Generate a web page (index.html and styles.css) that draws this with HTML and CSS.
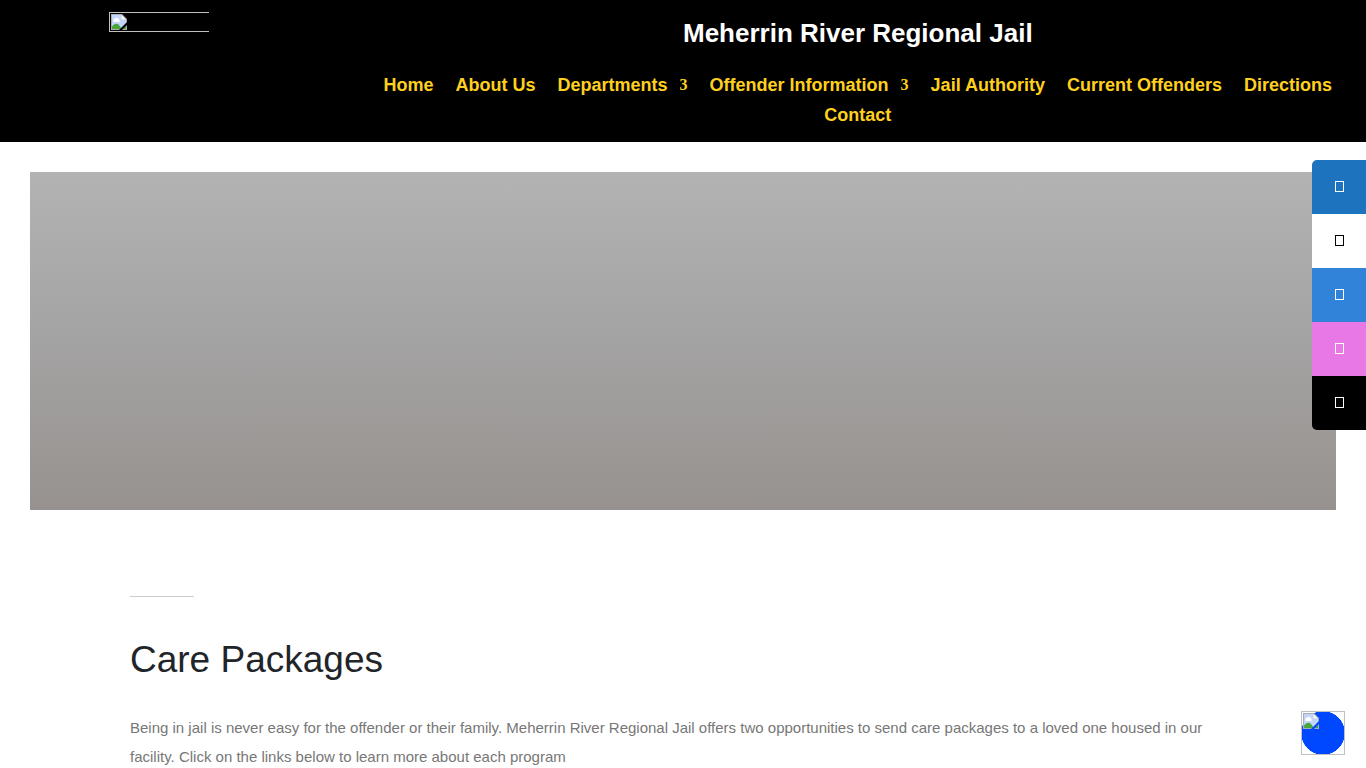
FILE: index.html
```html
<!DOCTYPE html>
<html lang="en">
<head>
<meta charset="UTF-8">
<meta name="viewport" content="width=device-width, initial-scale=1">
<title>Care Packages | Meherrin River Regional Jail</title>
<link rel="stylesheet" href="styles.css">
</head>
<body>

<!-- shared icon -->
<svg class="defs" width="0" height="0" aria-hidden="true">
  <symbol id="picture" viewBox="0 0 16 16">
    <path d="M0 0h11l5 5v11H0z" fill="#a9adb3"/>
    <path d="M1 1h9.500v4.500H15V15H1z" fill="#c3d5fb"/>
    <path d="M10.500 1v4.500H15z" fill="#fff"/>
    <path d="M3 8a2 2 0 0 1 1-3.500 2.500 2.500 0 0 1 4 1A1.500 1.500 0 0 1 8 8z" fill="#fff"/>
    <path d="M1 15v-2.500C3 9.500 6 9 8 11l3 4z" fill="#4aa53c"/>
    <path d="M11 15l4-3.500V15z" fill="#4aa53c"/>
    <path class="tear" d="M8 16l8-8v3l-5 5z"/>
  </symbol>
</svg>

<header class="header">
  <a class="logo" href="#" aria-label="Meherrin River Regional Jail">
    <svg class="picture" width="16" height="16"><use href="#picture"/></svg>
  </a>
  <div class="header-main">
    <h2 class="site-title">Meherrin River Regional Jail</h2>
    <nav class="menu">
      <a href="#">Home</a>
      <a href="#">About Us</a>
      <a href="#">Departments<span class="arrow">3</span></a>
      <a href="#">Offender Information<span class="arrow">3</span></a>
      <a href="#">Jail Authority</a>
      <a href="#">Current Offenders</a>
      <a href="#">Directions</a>
      <a href="#">Contact</a>
    </nav>
  </div>
</header>

<main class="page">
  <div class="hero"></div>
  <section class="content">
    <hr class="divider">
    <h1>Care Packages</h1>
    <p>Being in jail is never easy for the offender or their family. Meherrin River Regional Jail offers two opportunities to send care packages to a loved one housed in our facility. Click on the links below to learn more about each program</p>
  </section>
</main>

<aside class="toolbar">
  <button class="tool blue" type="button" aria-label="Tool 1"><span class="glyph"></span></button>
  <button class="tool white" type="button" aria-label="Tool 2"><span class="glyph"></span></button>
  <button class="tool light" type="button" aria-label="Tool 3"><span class="glyph"></span></button>
  <button class="tool pink" type="button" aria-label="Tool 4"><span class="glyph"></span></button>
  <button class="tool black" type="button" aria-label="Tool 5"><span class="glyph"></span></button>
</aside>

<button class="widget" type="button" aria-label="Accessibility">
  <svg class="picture" width="16" height="16"><use href="#picture"/></svg>
</button>

</body>
</html>
```
FILE: styles.css
```css
*
{
  box-sizing:border-box;
  margin:0;
  padding:0;
}
body
{
  background:#fff;
  color:#777;
  font-family:"Liberation Sans",Arial,sans-serif;
  font-size:15px;
  overflow-x:hidden;
}
button{border:none;cursor:pointer;}
.defs{position:absolute;}
.picture{display:block;}
.tear{fill:var(--tear);}

/* ===== Header ===== */
.header
{
  display:grid;
  grid-template-columns:5fr 16fr;
  column-gap:32px;
  padding:12px 0;
  background:#000;
}
.logo
{
  --tear:#000;
  justify-self:center;
  align-self:start;
  width:100px;
  height:20px;
  padding:1px;
  border:1px solid #c0c0c0;
  border-right:none;
}
.site-title
{
  margin-bottom:16px;
  color:#fff;
  font-size:26px;
  line-height:42px;
  text-align:center;
}
.menu
{
  display:flex;
  flex-wrap:wrap;
  justify-content:center;
  column-gap:22px;
}
.menu a
{
  display:flex;
  align-items:center;
  color:#ffd01e;
  font-size:18px;
  font-weight:bold;
  line-height:30px;
  text-decoration:none;
}
.arrow
{
  margin-left:12px;
  font-family:"Liberation Serif",serif;
  font-size:16px;
}

/* ===== Page ===== */
.page{padding:30px;}
.hero
{
  height:338px;
  background:linear-gradient(#b3b3b3,#a4a3a3 50%,#97928f);
}
.content{padding:86px 100px 0;}
.divider
{
  width:64px;
  border:none;
  border-top:1px solid #ccc;
}
h1
{
  margin:40px 0 30px;
  color:#212529;
  font-size:37px;
  font-weight:normal;
  line-height:46px;
}
.content p{line-height:29px;}

/* ===== Side toolbar ===== */
.toolbar
{
  position:fixed;
  top:160px;
  right:0;
  display:flex;
  flex-direction:column;
  border-radius:5px 0 0 5px;
  overflow:hidden;
}
.tool
{
  display:flex;
  align-items:center;
  justify-content:center;
  width:54px;
  height:54px;
  padding-bottom:2px;
  color:#fff;
}
.glyph
{
  width:9px;
  height:11px;
  border:1px solid currentColor;
}
.blue{background:#1e73be;}
.white{background:#fff;color:#000;}
.light{background:#3083d8;}
.pink{background:#e778e6;}
.black{background:#000;}

/* ===== Round widget ===== */
.widget
{
  --tear:#0048ff;
  position:fixed;
  right:21px;
  bottom:13px;
  width:44px;
  height:44px;
  padding:1px;
  border:1px solid #c0c0c0;
  background:radial-gradient(circle closest-side,#0048ff 98%,transparent) border-box;
}
.widget .picture{margin-bottom:24px;}
```
